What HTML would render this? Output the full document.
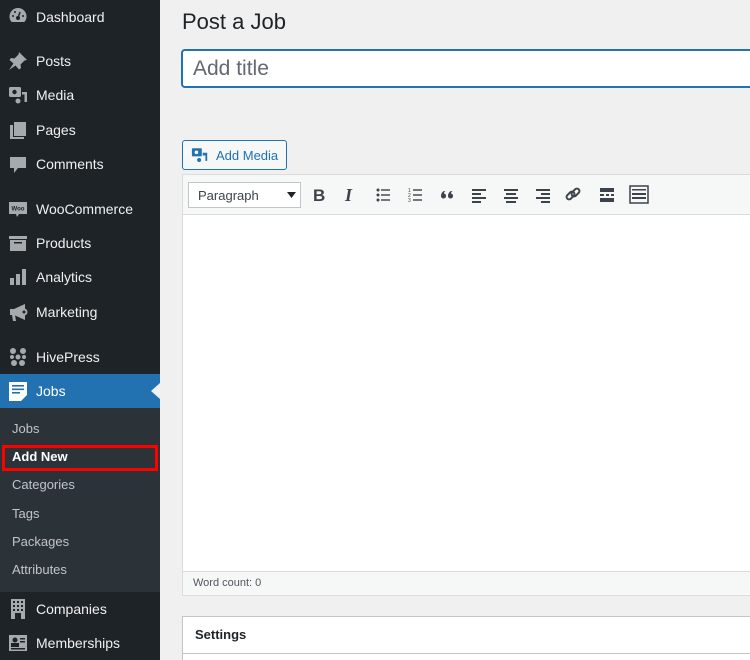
<!DOCTYPE html>
<html style="width:750px;height:660px;overflow:hidden"><head><style>
*{margin:0;padding:0;box-sizing:border-box}
body{width:750px;height:660px;overflow:hidden;background:#f0f0f1;font-family:"Liberation Sans",sans-serif;position:relative}
#sb{position:absolute;left:0;top:0;width:160px;height:660px;background:#1d2327}
.mi{position:absolute;left:36px;color:#f0f0f1;font-size:14px;line-height:18px}
.ic{position:absolute;left:8px;width:20px;height:20px}
#sub{position:absolute;left:0;top:408px;width:160px;height:184px;background:#2c3338}
.si{position:absolute;left:12px;color:#c3c4c7;font-size:13px;line-height:16px}
#jobs{position:absolute;left:0;top:374px;width:160px;height:34px;background:#2271b1}
.abs{position:absolute}
</style></head><body>
<div id="sb">
<svg class="ic" style="top:6px" viewBox="0 0 20 20"><path d="M10 2a8.5 8.5 0 0 0-8.5 8.5c0 2.3.8 4.2 2.2 5.5h12.6c1.4-1.3 2.2-3.2 2.2-5.5A8.5 8.5 0 0 0 10 2z" fill="#a7aaad"/><circle cx="10" cy="12" r="2" fill="#1d2327"/><path d="M10 12l2-6" stroke="#1d2327" stroke-width="1.5"/><g fill="#1d2327"><circle cx="5" cy="10" r="1"/><circle cx="7" cy="6" r="1"/><circle cx="15" cy="10" r="1"/></g></svg>
<div class="mi" style="top:8px">Dashboard</div>
<svg class="ic" style="top:51px" viewBox="0 0 20 20"><path d="M11 1l8 8-2.5.5-4 4 .5 3.5-2 1.5-3.5-4L1 19l4.5-6.5-4-3.5 1.5-2 3.5.5 4-4z" fill="#a7aaad"/></svg>
<div class="mi" style="top:52px">Posts</div>
<svg class="ic" style="top:85px" viewBox="0 0 20 20"><rect x="1" y="2" width="12" height="10" rx="1.5" fill="#a7aaad"/><circle cx="6.5" cy="7" r="2.2" fill="#1d2327"/><path d="M14 7h5v10h-2.5v-7.5H14z" fill="#a7aaad"/><circle cx="10" cy="16" r="2.5" fill="#a7aaad"/></svg>
<div class="mi" style="top:86px">Media</div>
<svg class="ic" style="top:120px" viewBox="0 0 20 20"><rect x="6" y="2" width="12" height="14" fill="#a7aaad"/><path d="M2 5h3v12h11v2H2z" fill="#a7aaad"/></svg>
<div class="mi" style="top:121px">Pages</div>
<svg class="ic" style="top:154px" viewBox="0 0 20 20"><path d="M2 3h16v11h-8l-4 5v-5H2z" fill="#a7aaad"/></svg>
<div class="mi" style="top:155px">Comments</div>
<svg class="ic" style="top:199px" viewBox="0 0 20 20"><path d="M1 3h18a0 0 0 0 1 0 0v12H11l-2 3-1-3H1z" fill="#a7aaad"/><text x="10" y="11.5" font-size="6" text-anchor="middle" fill="#1d2327" font-family="Liberation Sans" font-weight="bold">Woo</text></svg>
<div class="mi" style="top:200px">WooCommerce</div>
<svg class="ic" style="top:233px" viewBox="0 0 20 20"><rect x="1" y="3" width="18" height="3" fill="#a7aaad"/><rect x="2" y="7" width="16" height="11" fill="#a7aaad"/><rect x="6" y="9" width="8" height="1.5" fill="#1d2327"/></svg>
<div class="mi" style="top:234px">Products</div>
<svg class="ic" style="top:267px" viewBox="0 0 20 20"><rect x="2" y="11" width="4" height="7" fill="#a7aaad"/><rect x="8" y="7" width="4" height="11" fill="#a7aaad"/><rect x="14" y="2" width="4" height="16" fill="#a7aaad"/></svg>
<div class="mi" style="top:268px">Analytics</div>
<svg class="ic" style="top:302px" viewBox="0 0 20 20"><path d="M2 7h4l11-5v16L6 13H2z" fill="#a7aaad"/><circle cx="16" cy="10" r="3.5" fill="#a7aaad"/><circle cx="16" cy="10" r="1.5" fill="#1d2327"/><path d="M4 13h3l1 6H5z" fill="#a7aaad"/></svg>
<div class="mi" style="top:303px">Marketing</div>
<svg class="ic" style="top:347px" viewBox="0 0 20 20"><g fill="#a7aaad"><circle cx="5" cy="4" r="3"/><circle cx="15" cy="4" r="3"/><circle cx="10" cy="10" r="2.5"/><circle cx="4" cy="10" r="2"/><circle cx="16" cy="10" r="2"/><circle cx="6" cy="16" r="3"/><circle cx="14" cy="16" r="3"/></g></svg>
<div class="mi" style="top:348px">HivePress</div>
<div id="jobs"></div>
<svg class="ic" style="top:381px" viewBox="0 0 20 20"><path d="M1 1h18v13l-6 6H1z" fill="#fff"/><g fill="#2271b1"><rect x="4" y="4" width="12" height="1.6"/><rect x="4" y="7.5" width="12" height="1.6"/><rect x="4" y="11" width="8" height="1.6"/></g></svg>
<div class="mi" style="top:382px;color:#fff">Jobs</div>
<svg class="abs" style="left:151px;top:383px" width="9" height="16"><path d="M9 0L0 8l9 8z" fill="#f0f0f1"/></svg>
<div id="sub"></div>
<div class="si" style="top:421px">Jobs</div>
<div class="abs" style="left:2px;top:445px;width:156px;height:26px;border:3px solid #f00"></div>
<div class="si" style="top:449px;color:#fff;font-weight:bold">Add New</div>
<div class="si" style="top:477px">Categories</div>
<div class="si" style="top:506px">Tags</div>
<div class="si" style="top:534px">Packages</div>
<div class="si" style="top:562px">Attributes</div>
<svg class="ic" style="top:599px" viewBox="0 0 20 20"><rect x="3" y="0" width="14" height="20" fill="#a7aaad"/><g fill="#1d2327"><rect x="5" y="2" width="2" height="2"/><rect x="9" y="2" width="2" height="2"/><rect x="13" y="2" width="2" height="2"/><rect x="5" y="6" width="2" height="2"/><rect x="9" y="6" width="2" height="2"/><rect x="13" y="6" width="2" height="2"/><rect x="5" y="10" width="2" height="2"/><rect x="9" y="10" width="2" height="2"/><rect x="13" y="10" width="2" height="2"/><rect x="7" y="14" width="6" height="6"/></g></svg>
<div class="mi" style="top:600px">Companies</div>
<svg class="ic" style="top:633px" viewBox="0 0 20 20"><rect x="1" y="2" width="18" height="16" fill="#a7aaad"/><circle cx="7" cy="7" r="2.5" fill="#1d2327"/><rect x="3" y="10" width="8" height="4" fill="#1d2327"/><g fill="#1d2327"><rect x="12" y="5" width="5" height="1.5"/><rect x="12" y="8" width="5" height="1.5"/><rect x="3" y="15" width="14" height="1.5"/></g></svg>
<div class="mi" style="top:634px">Memberships</div>
</div>

<div class="abs" style="left:182px;top:9px;font-size:22px;color:#1d2327">Post a Job</div>
<div class="abs" style="left:181px;top:49px;width:580px;height:39px;border:2px solid #2271b1;border-radius:4px;background:#fff"></div>
<div class="abs" style="left:193px;top:57px;font-size:21px;color:#646970">Add title</div>

<div class="abs" style="left:182px;top:140px;width:105px;height:30px;border:1px solid #2271b1;border-radius:3px;background:#f6f7f7"></div>
<svg class="abs" style="left:191px;top:147px" width="18" height="17" viewBox="0 0 20 18"><rect x="1" y="1" width="11" height="9" rx="1" fill="#2271b1"/><circle cx="6" cy="5.5" r="2" fill="#f6f7f7"/><path d="M13 6h5v9h-2v-6h-3z" fill="#2271b1"/><circle cx="9" cy="14" r="2.2" fill="#2271b1"/></svg>
<div class="abs" style="left:216px;top:148px;font-size:13px;color:#2271b1">Add Media</div>

<div class="abs" style="left:182px;top:174px;width:580px;height:422px;border:1px solid #dcdcde;background:#fff"></div>
<div class="abs" style="left:183px;top:175px;width:580px;height:40px;background:#f6f7f7;border-bottom:1px solid #dcdcde"></div>
<div class="abs" style="left:188px;top:182px;width:113px;height:26px;border:1px solid #c3c4c7;background:#fff"></div>
<div class="abs" style="left:198px;top:188px;font-size:13px;color:#3c434a">Paragraph</div>
<svg class="abs" style="left:287px;top:192px" width="9" height="6"><path d="M0 0h9L4.5 6z" fill="#1d2327"/></svg>
<svg class="abs" style="left:308px;top:184px" width="350" height="22" viewBox="0 0 350 22">
<g fill="#3c434a" stroke="none">
<text x="5" y="17" font-size="17" font-weight="bold" font-family="Liberation Sans">B</text>
<text x="37" y="17" font-size="18" font-style="italic" font-weight="bold" font-family="Liberation Serif">I</text>
<circle cx="70" cy="6" r="1.5"/><circle cx="70" cy="11" r="1.5"/><circle cx="70" cy="16" r="1.5"/>
<rect x="73" y="5.3" width="9" height="1.4"/><rect x="73" y="10.3" width="9" height="1.4"/><rect x="73" y="15.3" width="9" height="1.4"/>
<rect x="105" y="5.3" width="9" height="1.4"/><rect x="105" y="10.3" width="9" height="1.4"/><rect x="105" y="15.3" width="9" height="1.4"/>
<text x="100" y="18" font-size="5" font-family="Liberation Sans">3</text><text x="100" y="13" font-size="5" font-family="Liberation Sans">2</text><text x="100" y="8" font-size="5" font-family="Liberation Sans">1</text>
<path d="M136 7c-2 1-3 3-3 5a2.5 2.5 0 1 0 3-2.5c0-1 .5-2 1.5-2.5zM143 7c-2 1-3 3-3 5a2.5 2.5 0 1 0 3-2.5c0-1 .5-2 1.5-2.5z"/>
<rect x="164" y="5" width="14" height="2"/><rect x="164" y="9" width="9" height="2"/><rect x="164" y="13" width="14" height="2"/><rect x="164" y="17" width="9" height="2"/>
<rect x="196" y="5" width="14" height="2"/><rect x="198" y="9" width="10" height="2"/><rect x="196" y="13" width="14" height="2"/><rect x="198" y="17" width="10" height="2"/>
<rect x="228" y="5" width="14" height="2"/><rect x="233" y="9" width="9" height="2"/><rect x="228" y="13" width="14" height="2"/><rect x="233" y="17" width="9" height="2"/>
<g stroke="#3c434a" stroke-width="2" fill="none"><rect x="258" y="9" width="9" height="5" rx="2.5" transform="rotate(-45 262.5 11.5)"/><rect x="263" y="6" width="9" height="5" rx="2.5" transform="rotate(-45 267.5 8.5)"/></g>
<rect x="292" y="4" width="14" height="4"/><rect x="292" y="10" width="4" height="2"/><rect x="298" y="10" width="3" height="2"/><rect x="303" y="10" width="3" height="2"/><rect x="292" y="14" width="14" height="4"/>
<rect x="322" y="2" width="18" height="17" fill="none" stroke="#3c434a" stroke-width="1.5"/><rect x="324" y="5" width="14" height="1.5"/><rect x="324" y="9" width="14" height="2"/><rect x="324" y="13" width="14" height="2"/>
</g></svg>
<div class="abs" style="left:183px;top:571px;width:580px;height:24px;background:#f6f7f7;border-top:1px solid #dcdcde"></div>
<div class="abs" style="left:193px;top:577px;font-size:11px;color:#50575e">Word count: 0</div>

<div class="abs" style="left:182px;top:616px;width:580px;height:44px;border:1px solid #c3c4c7;border-bottom:none;background:#fff"></div>
<div class="abs" style="left:183px;top:653px;width:580px;height:1px;background:#c3c4c7"></div>
<div class="abs" style="left:195px;top:627px;font-size:13px;font-weight:bold;color:#1d2327">Settings</div>
</body></html>
